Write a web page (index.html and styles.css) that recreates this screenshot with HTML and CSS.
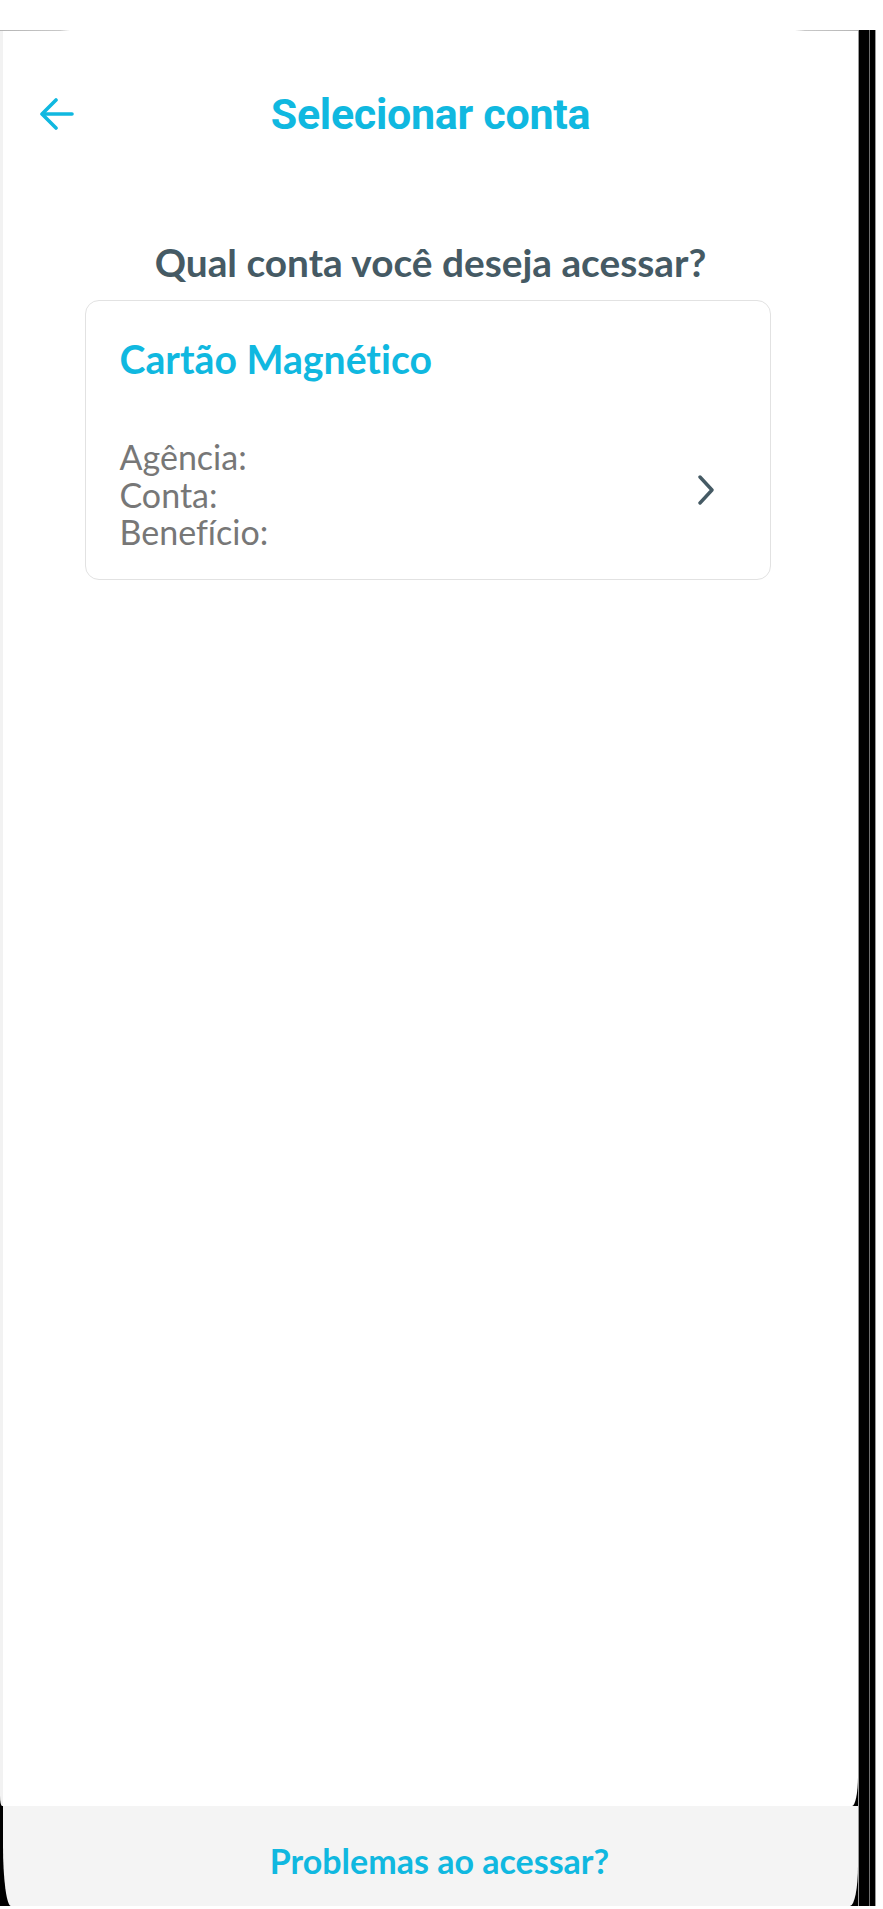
FILE: index.html
```html
<!DOCTYPE html>
<html lang="pt-BR">
<head>
<meta charset="utf-8">
<title>Selecionar conta</title>
<link rel="stylesheet" href="styles.css">
</head>
<body>
<div class="page">
  <div class="device">
    <div class="screen">
      <div class="statusline"></div>
      <div class="main">
        <header class="header">
          <button class="back" aria-label="Voltar">
            <svg width="34" height="32" viewBox="0 0 34 32" fill="none" stroke="currentColor" stroke-width="3.6" stroke-linecap="round" stroke-linejoin="round"><path d="M32 16H3"/><path d="M16 2L2 16l14 14"/></svg>
          </button>
          <h1 class="title">Selecionar conta</h1>
          <span></span>
        </header>
        <h2 class="question">Qual conta você deseja acessar?</h2>
        <div class="card">
          <div class="card-title">Cartão Magnético</div>
          <div class="card-row">
            <div class="card-info">
              <div>Agência:</div>
              <div>Conta:</div>
              <div>Benefício:</div>
            </div>
            <svg class="chevron" width="18" height="30" viewBox="0 0 18 30" fill="none" stroke="currentColor" stroke-width="3.4" stroke-linecap="round" stroke-linejoin="round"><path d="M3 2l12 13L3 28"/></svg>
          </div>
        </div>
      </div>
      <footer class="footer">Problemas ao acessar?</footer>
    </div>
    <div class="bezel"></div>
  </div>
</div>
</body>
</html>
```
FILE: styles.css
```css
html, body {
  margin: 0;
  padding: 0;
  background: #ffffff;
}
.page {
  width: 883px;
  height: 1909px;
  background: #ffffff;
  overflow: hidden;
}
.device {
  margin-top: 30px;
  width: 876px;
  height: 1876px;
  display: flex;
}
.screen {
  width: 858px;
  display: flex;
  flex-direction: column;
  background: #000;
}
.statusline {
  height: 1px;
  background: linear-gradient(to right, #b5b5b5 0, #c8c8c8 60px, #ffffff 70px, #ffffff 795px, #c8c8c8 805px, #b5b5b5 100%);
}
.main {
  flex: 1;
  background: #fff;
  border-left: 3px solid #f2f2f2;
  border-bottom-right-radius: 6px 30px;
  border-bottom-left-radius: 2px 10px;
  display: flex;
  flex-direction: column;
  font-family: Lato, "Liberation Sans", sans-serif;
  font-variant-ligatures: none;
}
.header {
  margin-top: 51px;
  height: 64px;
  display: grid;
  grid-template-columns: 1fr auto 1fr;
  align-items: center;
}
.back {
  justify-self: start;
  margin-left: 37px;
  padding: 0;
  border: 0;
  background: none;
  color: #10b8e0;
  display: flex;
}
.title {
  margin: 0;
  font-family: Roboto, "Liberation Sans", sans-serif;
  font-weight: 700;
  font-size: 43px;
  line-height: 64px;
  color: #10b8e0;
  letter-spacing: -0.3px;
}
.question {
  margin: 94px 0 0;
  text-align: center;
  font-weight: 700;
  font-size: 38.8px;
  line-height: 44px;
  color: #455a64;
}
.card {
  margin: 16px 0 0 82px;
  width: 686px;
  height: 280px;
  box-sizing: border-box;
  border: 1.5px solid #e2e2e2;
  border-radius: 14px;
  padding: 37px 0 0 33.5px;
}
.card-title {
  font-weight: 700;
  font-size: 39.2px;
  line-height: 42px;
  color: #10b8e0;
}
.card-row {
  margin-top: 58px;
  display: flex;
  align-items: center;
  justify-content: space-between;
}
.card-info {
  font-size: 34px;
  line-height: 37.5px;
  color: #777777;
}
.chevron {
  color: #455a64;
  margin-right: 55px;
  margin-top: -8px;
}
.footer {
  height: 100px;
  margin-left: 3px;
  background: #f4f4f4;
  border-bottom-left-radius: 8px 60px;
  border-bottom-right-radius: 8px 40px;
  display: flex;
  align-items: center;
  justify-content: center;
  padding: 8px 0 0 18px;
  box-sizing: border-box;
  font-family: Lato, "Liberation Sans", sans-serif;
  font-variant-ligatures: none;
  font-weight: 700;
  font-size: 34px;
  color: #10b8e0;
}
.bezel {
  width: 18px;
  background: linear-gradient(to right, #9a9a9a 0, #9a9a9a 1px, #000 1px, #000 11px, #6e6e6e 11px, #6e6e6e 12px, #000 12px, #000 17px, #9a9a9a 17px);
}
```
